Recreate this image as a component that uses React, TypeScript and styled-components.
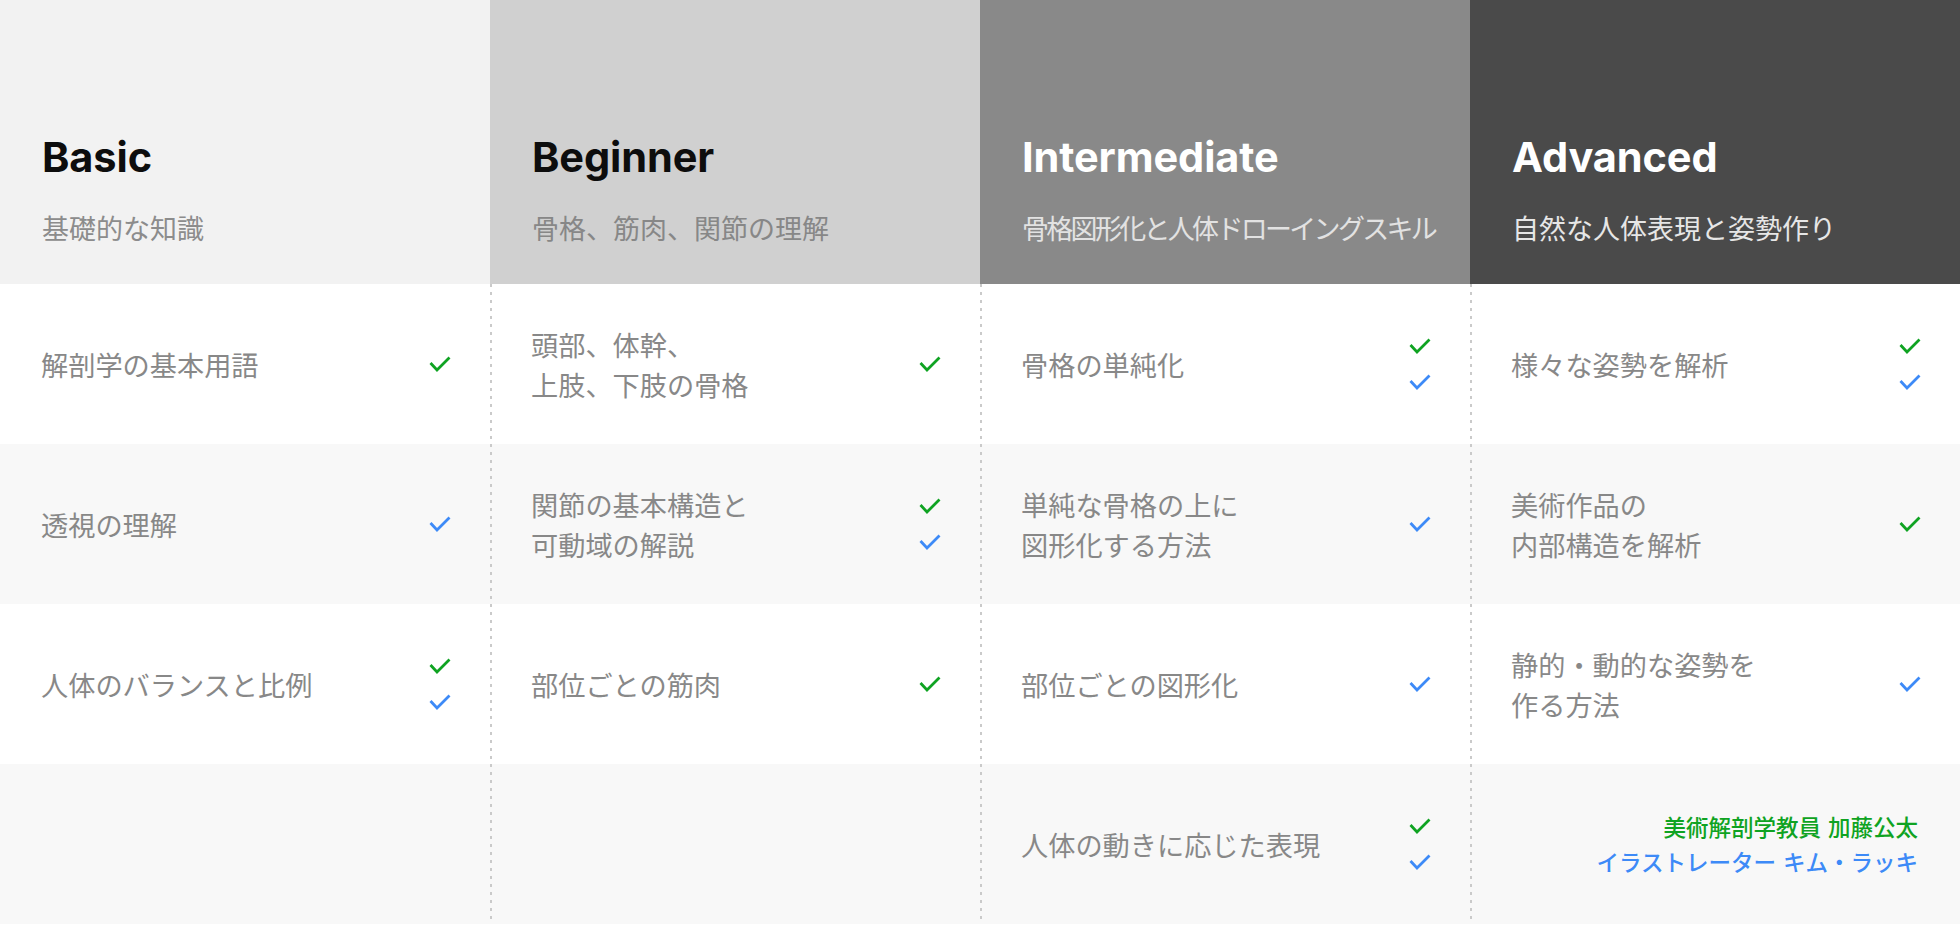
import React from "react";
import styled, { createGlobalStyle } from "styled-components";

const GlobalStyle = createGlobalStyle`
  html, body { margin: 0; padding: 0; background: #ffffff; }
  body { font-family: "Noto Sans CJK JP", "Noto Sans", sans-serif; }
  * { box-sizing: border-box; }
`;

const GREEN = "#0fa322";
const BLUE = "#3d8af7";

const Table = styled.div`
  display: grid;
  grid-template-columns: repeat(4, 490px);
  grid-template-rows: 284px repeat(4, 160px);
  width: 1960px;
`;

const HeaderCell = styled.div<{ $bg: string }>`
  background: ${(p) => p.$bg};
  padding: 133px 40px 0 42px;
  display: flex;
  flex-direction: column;
`;

const Title = styled.h2<{ $color: string }>`
  margin: 0;
  font-family: "Inter", "Liberation Sans", sans-serif;
  font-weight: 700;
  font-size: 41.5px;
  line-height: 49px;
  letter-spacing: -0.1px;
  color: ${(p) => p.$color};
`;

const Subtitle = styled.p<{ $color: string; $tight?: boolean }>`
  margin: 26px 0 0 0;
  font-family: "Noto Sans CJK JP", "Noto Sans", sans-serif;
  font-size: 27px;
  line-height: 40px;
  font-weight: 400;
  letter-spacing: ${(p) => (p.$tight ? "-2.7px" : "0")};
  color: ${(p) => p.$color};
  white-space: nowrap;
`;

const BodyCell = styled.div<{ $alt: boolean; $divider: boolean }>`
  background-color: ${(p) => (p.$alt ? "#f8f8f8" : "#ffffff")};
  background-image: ${(p) =>
    p.$divider
      ? "repeating-linear-gradient(to bottom, #cacaca 0 3px, transparent 3px 8px)"
      : "none"};
  background-size: 2px 100%;
  background-repeat: no-repeat;
  background-position: left top;
  display: flex;
  align-items: center;
  justify-content: space-between;
  padding: 0 39px 0 41px;
`;

const ItemText = styled.div`
  font-family: "Noto Sans CJK JP", "Noto Sans", sans-serif;
  font-size: 27.2px;
  line-height: 40px;
  color: #888888;
  white-space: pre-line;
`;

const Checks = styled.div`
  display: flex;
  flex-direction: column;
  gap: 20px;
  align-items: center;
`;

const Credits = styled.div`
  flex: 1;
  text-align: right;
  font-family: "Noto Sans CJK JP", "Noto Sans", sans-serif;
  font-size: 22.5px;
  line-height: 35px;
  font-weight: 500;
  word-spacing: 2px;
  margin-right: 3px;
`;

const CreditLine = styled.div<{ $color: string }>`
  color: ${(p) => p.$color};
  white-space: nowrap;
`;

const Check = ({ color }: { color: string }) => (
  <svg width="22" height="16" viewBox="0 0 22 16" fill="none">
    <polyline
      points="1.5,7 8,14 20.5,1.5"
      stroke={color}
      strokeWidth="2.8"
      strokeLinecap="butt"
      strokeLinejoin="miter"
    />
  </svg>
);

type Item = { text: string; checks: ("g" | "b")[] } | null;

type Column = {
  title: string;
  subtitle: string;
  tight?: boolean;
  bg: string;
  titleColor: string;
  subColor: string;
  items: (Item | "credits")[];
};

const columns: Column[] = [
  {
    title: "Basic",
    subtitle: "基礎的な知識",
    bg: "#f2f2f2",
    titleColor: "#0d0d0d",
    subColor: "#8c8c8c",
    items: [
      { text: "解剖学の基本用語", checks: ["g"] },
      { text: "透視の理解", checks: ["b"] },
      { text: "人体のバランスと比例", checks: ["g", "b"] },
      null,
    ],
  },
  {
    title: "Beginner",
    subtitle: "骨格、筋肉、関節の理解",
    bg: "#d0d0d0",
    titleColor: "#0d0d0d",
    subColor: "#878787",
    items: [
      { text: "頭部、体幹、\n上肢、下肢の骨格", checks: ["g"] },
      { text: "関節の基本構造と\n可動域の解説", checks: ["g", "b"] },
      { text: "部位ごとの筋肉", checks: ["g"] },
      null,
    ],
  },
  {
    title: "Intermediate",
    subtitle: "骨格図形化と人体ドローイングスキル",
    tight: true,
    bg: "#898989",
    titleColor: "#ffffff",
    subColor: "#e2e2e2",
    items: [
      { text: "骨格の単純化", checks: ["g", "b"] },
      { text: "単純な骨格の上に\n図形化する方法", checks: ["b"] },
      { text: "部位ごとの図形化", checks: ["b"] },
      { text: "人体の動きに応じた表現", checks: ["g", "b"] },
    ],
  },
  {
    title: "Advanced",
    subtitle: "自然な人体表現と姿勢作り",
    bg: "#4a4a4a",
    titleColor: "#ffffff",
    subColor: "#e6e6e6",
    items: [
      { text: "様々な姿勢を解析", checks: ["g", "b"] },
      { text: "美術作品の\n内部構造を解析", checks: ["g"] },
      { text: "静的・動的な姿勢を\n作る方法", checks: ["b"] },
      "credits",
    ],
  },
];

export default function App() {
  const cells: React.ReactNode[] = [];
  columns.forEach((c) =>
    cells.push(
      <HeaderCell key={`h-${c.title}`} $bg={c.bg}>
        <Title $color={c.titleColor}>{c.title}</Title>
        <Subtitle $color={c.subColor} $tight={c.tight}>
          {c.subtitle}
        </Subtitle>
      </HeaderCell>
    )
  );
  for (let r = 0; r < 4; r++) {
    columns.forEach((c, ci) => {
      const item = c.items[r];
      cells.push(
        <BodyCell key={`c-${r}-${ci}`} $alt={r % 2 === 1} $divider={ci > 0}>
          {item === "credits" ? (
            <Credits>
              <CreditLine $color={GREEN}>美術解剖学教員 加藤公太</CreditLine>
              <CreditLine $color={BLUE}>イラストレーター キム・ラッキ</CreditLine>
            </Credits>
          ) : item ? (
            <>
              <ItemText>{item.text}</ItemText>
              <Checks>
                {item.checks.map((k, i) => (
                  <Check key={i} color={k === "g" ? GREEN : BLUE} />
                ))}
              </Checks>
            </>
          ) : null}
        </BodyCell>
      );
    });
  }
  return (
    <>
      <GlobalStyle />
      <Table>{cells}</Table>
    </>
  );
}
